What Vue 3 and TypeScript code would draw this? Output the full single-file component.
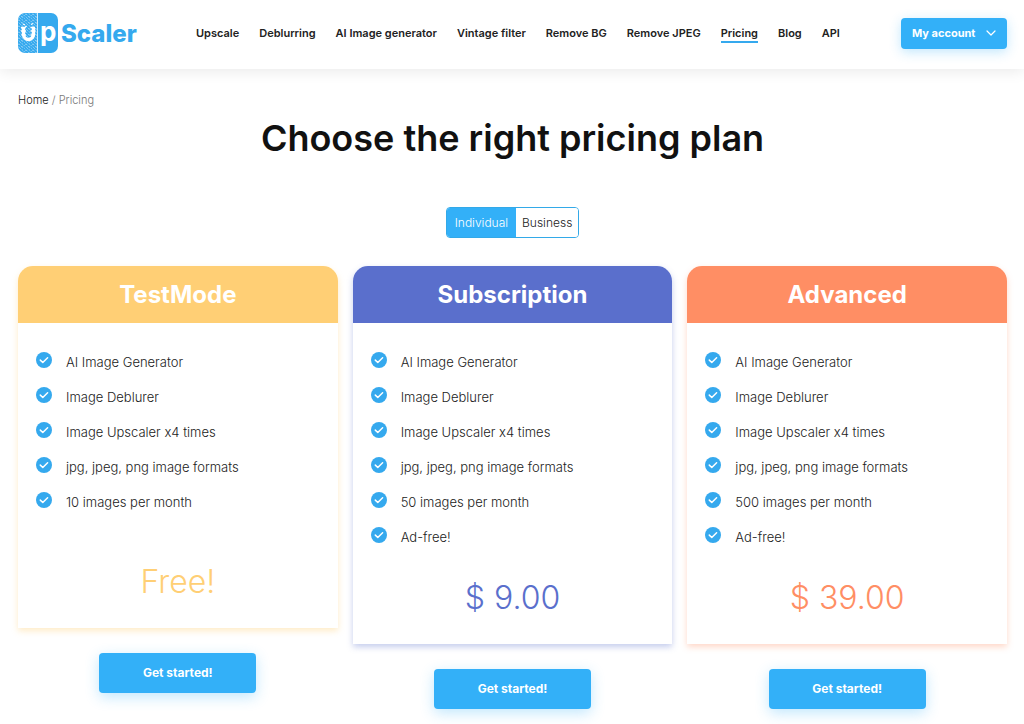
<script setup lang="ts">
import { ref } from 'vue'

interface Plan {
  name: string
  tone: string
  features: string[]
  price: string
}

const links: string[] = [
  'Upscale',
  'Deblurring',
  'AI Image generator',
  'Vintage filter',
  'Remove BG',
  'Remove JPEG',
  'Pricing',
  'Blog',
  'API',
]

const common: string[] = [
  'AI Image Generator',
  'Image Deblurer',
  'Image Upscaler x4 times',
  'jpg, jpeg, png image formats',
]

const plans: Plan[] = [
  { name: 'TestMode', tone: 'yellow', features: [...common, '10 images per month'], price: 'Free!' },
  { name: 'Subscription', tone: 'indigo', features: [...common, '50 images per month', 'Ad-free!'], price: '$ 9.00' },
  { name: 'Advanced', tone: 'coral', features: [...common, '500 images per month', 'Ad-free!'], price: '$ 39.00' },
]

const audiences: string[] = ['Individual', 'Business']
const audience = ref<string>('Individual')
</script>

<template>
  <div class="page">
    <header class="topbar">
      <a class="logo" href="#" aria-label="UpScaler">
        <svg class="logo-mark" viewBox="0 0 40 40" aria-hidden="true">
          <defs>
            <pattern id="grain" width="7" height="6" patternUnits="userSpaceOnUse">
              <path
                d="M0 1.2h1.4l1 1.1M3.6.5l1.5.9M5.6 2.6h1.2M.8 3.6l1 1.2M3 3.6h1.3l.6 1.3M6 5l.8.6M2 5.6h.9"
                fill="none"
                stroke="#fff"
                stroke-width=".45"
              />
            </pattern>
          </defs>
          <rect width="40" height="40" rx="7" fill="#35a9ee" />
          <path d="M7 0H19V40H7a7 7 0 0 1-7-7V7a7 7 0 0 1 7-7z" fill="url(#grain)" />
          <path d="M19.500 0V40" stroke="#fff" stroke-width=".8" />
          <path d="M5.500 15v6a5 5.500 0 0 0 10 0V15" fill="none" stroke="#fff" stroke-width="3.400" />
          <path d="M3 14.500h4l1.500-1.500M3 18h5M3.500 22h4.500M12.500 14.500H17M12.500 18h5M12.500 22h4M5 11l2 1M13 11.500l2-1" fill="none" stroke="#fff" stroke-width="1.300" />
          <text x="22" y="28" class="mark-p">p</text>
        </svg>
        <span class="logo-name">Scaler</span>
      </a>
      <nav class="nav" aria-label="Main">
        <a v-for="l in links" :key="l" href="#" :class="{ current: l === 'Pricing' }">{{ l }}</a>
      </nav>
      <button class="account" type="button">
        My account
        <svg viewBox="0 0 10 6" aria-hidden="true">
          <path d="M1 1l4 4 4-4" fill="none" stroke="#fff" stroke-width="1.200" stroke-linecap="round" stroke-linejoin="round" />
        </svg>
      </button>
    </header>

    <main class="main">
      <nav class="crumbs" aria-label="Breadcrumb"><a href="#">Home</a> / Pricing</nav>
      <h1>Choose the right pricing plan</h1>
      <div class="switch">
        <button
          v-for="a in audiences"
          :key="a"
          type="button"
          :class="{ on: audience === a }"
          :aria-pressed="audience === a"
          @click="audience = a"
        >
          {{ a }}
        </button>
      </div>

      <div class="plans">
        <section v-for="p in plans" :key="p.name" class="plan" :class="p.tone">
          <div class="card">
            <h2>{{ p.name }}</h2>
            <div class="body">
              <ul>
                <li v-for="f in p.features" :key="f">
                  <svg viewBox="0 0 16 16" aria-hidden="true">
                    <circle cx="8" cy="8" r="8" fill="#35a9ee" />
                    <path d="M4.300 8.100l2.500 2.400 4.800-4.700" fill="none" stroke="#fff" stroke-width="1.500" stroke-linecap="round" stroke-linejoin="round" />
                  </svg>
                  <span>{{ f }}</span>
                </li>
              </ul>
              <p class="price">{{ p.price }}</p>
            </div>
          </div>
          <button class="start" type="button">Get started!</button>
        </section>
      </div>
    </main>
  </div>
</template>

<style>
html,
body {
  margin: 0;
  background: #fff;
  overflow-x: hidden;
}
</style>

<style scoped>
.page {
  font-family: Inter, 'Open Sans', 'Liberation Sans', sans-serif;
  color: #222;
}
a {
  color: inherit;
  text-decoration: none;
}
button {
  font-family: inherit;
  border: 0;
  padding: 0;
  cursor: pointer;
}
.topbar {
  display: flex;
  align-items: center;
  height: 69px;
  padding: 0 17px 3px 18px;
  box-sizing: border-box;
  box-shadow: 0 2px 14px rgba(0, 0, 0, 0.09);
}
.logo {
  display: flex;
  align-items: center;
  gap: 3px;
  width: 178px;
  color: #35a9ee;
}
.logo-mark {
  width: 40px;
  height: 40px;
}
.mark-p {
  font-size: 26px;
  font-weight: 700;
  fill: #fff;
}
.logo-name {
  font-size: 24px;
  font-weight: 800;
}
.nav {
  display: flex;
  gap: 20px;
  font-size: 11px;
  font-weight: 600;
  line-height: 16px;
  white-space: nowrap;
}
.nav a {
  padding-top: 2px;
  border-bottom: 2px solid transparent;
}
.nav .current {
  border-color: #35a9ee;
}
.account {
  display: flex;
  align-items: center;
  justify-content: space-between;
  width: 106px;
  height: 31px;
  margin-left: auto;
  padding: 0 11px;
  border-radius: 4px;
  background: #33b0f8;
  color: #fff;
  font-size: 11px;
  font-weight: 700;
  white-space: nowrap;
  box-shadow: 0 3px 12px rgba(51, 176, 248, 0.3);
}
.account svg {
  width: 10px;
  height: 6px;
}
.main {
  padding: 23px 17px 0 18px;
}
.crumbs {
  font-size: 11px;
  font-weight: 300;
  line-height: 16px;
  color: #777;
}
.crumbs a {
  color: #222;
}
h1 {
  margin: 8px 0 0;
  font-size: 36px;
  font-weight: 600;
  line-height: 44px;
  text-align: center;
  color: #111;
}
.switch {
  display: flex;
  width: fit-content;
  margin: 47px auto 0;
  border: 1px solid #33a9e8;
  border-radius: 4px;
  overflow: hidden;
}
.switch button {
  height: 29px;
  padding: 0 6px;
  background: #fff;
  color: #222;
  font-size: 12px;
  font-weight: 300;
}
.switch .on {
  padding: 0 8px;
  background: #33b0f8;
  color: #fff;
}
.plans {
  display: grid;
  grid-template-columns: repeat(3, 1fr);
  gap: 15px;
  align-items: start;
  margin-top: 28px;
}
.plan {
  display: flex;
  flex-direction: column;
  align-items: center;
  gap: 25px;
  padding-bottom: 15px;
}
.card {
  width: 100%;
  border-radius: 15px 15px 0 0;
  box-shadow: 0 3px 6px var(--glow);
}
h2 {
  margin: 0;
  border-radius: 15px 15px 0 0;
  background: var(--tone);
  color: #fff;
  font-size: 24px;
  font-weight: 700;
  line-height: 57px;
  text-align: center;
}
.yellow {
  --tone: #ffcf75;
  --glow: rgba(255, 207, 117, 0.4);
}
.indigo {
  --tone: #5a6fcc;
  --glow: rgba(90, 111, 204, 0.35);
}
.coral {
  --tone: #ff8e64;
  --glow: rgba(255, 142, 100, 0.35);
}
.body {
  padding: 21px 18px 24px;
}
ul {
  margin: 0;
  padding: 0;
  list-style: none;
}
li {
  display: flex;
  align-items: center;
  gap: 14px;
  height: 35px;
  font-size: 13px;
  font-weight: 300;
}
li svg {
  width: 16px;
  height: 16px;
  margin-bottom: 4px;
}
.price {
  margin: 22px 0 0;
  color: var(--tone);
  font-size: 32px;
  font-weight: 300;
  line-height: 44px;
  text-align: center;
}
.yellow .price {
  margin-top: 41px;
}
.start {
  width: 157px;
  height: 40px;
  padding-bottom: 2px;
  border-radius: 4px;
  background: #33b0f8;
  color: #fff;
  font-size: 12px;
  font-weight: 700;
  box-shadow: 0 4px 14px rgba(51, 176, 248, 0.3);
}
</style>
